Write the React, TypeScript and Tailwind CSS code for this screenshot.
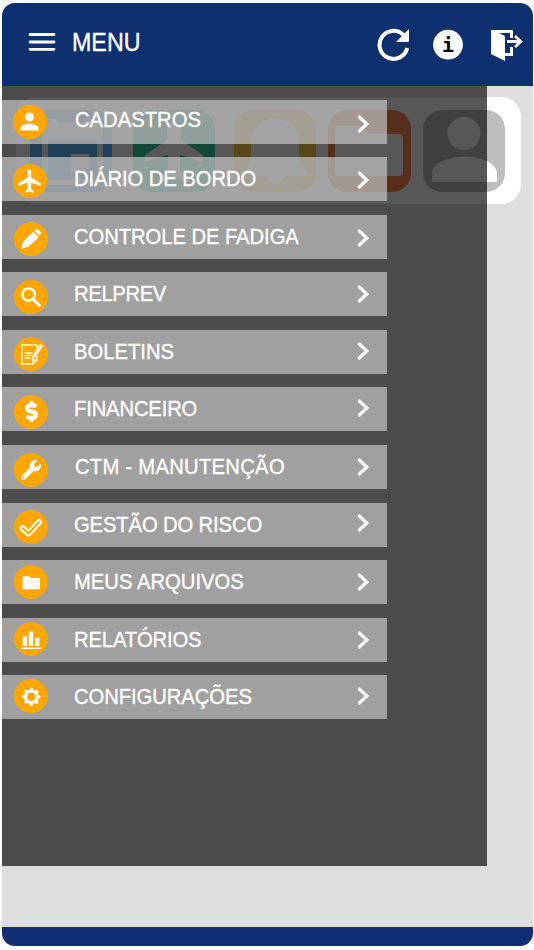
import React from 'react';
import { MdPerson, MdFlight } from 'react-icons/md';
import { FaDollarSign, FaWrench } from 'react-icons/fa';

const Pencil = () => (
  <svg viewBox="0 0 24 24" className="size-6" fill="white">
    <path d="M2 22 4.2 14.2 13.6 5.2Q14.4 4.8 15 5.5L19 9.6Q19.5 10.3 19 10.9L9.6 19.6Z" />
    <path d="M15.3 3.7 17 2.2Q18.2 1.4 19.2 2.4L21.6 4.9Q22.5 6 21.6 7L20.2 8.6Z" />
  </svg>
);

const Magnifier = () => (
  <svg viewBox="0 0 24 24" className="size-6" fill="none" stroke="white">
    <circle cx="9.6" cy="9.6" r="6.2" strokeWidth="2.5" />
    <path d="m14.2 14.2 7 7" strokeWidth="3" />
  </svg>
);

const Note = () => (
  <svg viewBox="0 0 24 24" className="size-6" fill="none" stroke="#fff6df" strokeWidth="1.4">
    <path d="M18 3H3v19h11l4-4v-4M14 22v-4h4M18 3v3" />
    <path d="M5.5 11h8M5.5 13.5h7M5.5 16h6" />
    <path d="m13.5 16.5 1-3.4L21.3 2.6l2 1.4-6.9 10.4z" fill="#fff6df" fillOpacity=".75" />
  </svg>
);

const DoubleCheck = () => (
  <svg viewBox="0 0 24 24" className="size-6" fill="none" strokeLinecap="round" strokeLinejoin="round">
    <path d="m3.7 13.2 5.8 5.3L20 7.3" stroke="white" strokeWidth="6" />
    <path d="m3.7 13.2 5.8 5.3L20 7.3" stroke="#ffa700" strokeWidth="2" />
  </svg>
);

const Folder = () => (
  <svg viewBox="0 0 24 24" className="size-6" fill="white">
    <path d="M4 6.2h6l2 1.8h8.2q.8 0 .8.8V18.4q0 .8-.8.8H4.4q-.8 0-.8-.8V6.8z" />
  </svg>
);

const Bars = () => (
  <svg viewBox="0 0 24 24" className="size-6" fill="white">
    <path d="M3.7 9.5h4.4v9.5h-4.4zM9.8 4.3h4.4V19h-4.4zM16 11h4.4v8h-4.4zM2.3 20.4h19.4V22H2.3z" />
  </svg>
);

const Gear = () => (
  <svg viewBox="0 0 24 24" className="size-6" fill="none" stroke="white">
    <circle cx="12.3" cy="12.8" r="5.8" strokeWidth="3" />
    <circle cx="12.3" cy="12.8" r="7.7" strokeWidth="2.6" strokeDasharray="3.1 2.95" strokeDashoffset="1.55" />
  </svg>
);

const items = [
  { label: 'CADASTROS', icon: <MdPerson className="size-[27px]" />, text: 'ml-[28.5px] mt-[-1.5px]', dot: 'ml-[10.5px] mt-[5px]', arrow: 'mt-[15px]' },
  { label: 'DIÁRIO DE BORDO', icon: <MdFlight className="size-7" />, text: 'tracking-[-0.08px] ml-[27.5px]', dot: 'ml-[10.5px] mt-[6.5px]', arrow: 'mt-[14px]' },
  { label: 'CONTROLE DE FADIGA', icon: <Pencil />, text: 'tracking-[-0.08px] ml-[26px]', dot: 'ml-3 mt-[7.5px]', arrow: 'mt-[14px]' },
  { label: 'RELPREV', icon: <Magnifier />, text: 'tracking-[-0.4px] ml-[26px]', dot: 'ml-3 mt-[7.7px]', arrow: 'mt-[13px]' },
  { label: 'BOLETINS', icon: <Note />, text: 'ml-[26px]', dot: 'ml-3 mt-[7.5px]', arrow: 'mt-[12px]' },
  { label: 'FINANCEIRO', icon: <FaDollarSign className="size-[21px]" stroke="white" strokeWidth="28" />, text: 'tracking-[-0.18px] ml-[26px]', dot: 'ml-3 mt-[7.5px]', arrow: 'mt-[12px]' },
  { label: 'CTM - MANUTENÇÃO', icon: <FaWrench className="size-5" />, text: 'tracking-[0.28px] ml-[27px]', dot: 'ml-3 mt-[7.5px]', arrow: 'mt-[13px]' },
  { label: 'GESTÃO DO RISCO', icon: <DoubleCheck />, text: 'tracking-[-0.15px] ml-[26px]', dot: 'ml-3 mt-[7px]', arrow: 'mt-[11.5px]' },
  { label: 'MEUS ARQUIVOS', icon: <Folder />, text: 'ml-[26px]', dot: 'ml-3 mt-[4.5px]', arrow: 'mt-[13px]' },
  { label: 'RELATÓRIOS', icon: <Bars />, text: 'tracking-[-0.18px] ml-[26px]', dot: 'ml-3 mt-[4px]', arrow: 'mt-[13px]' },
  { label: 'CONFIGURAÇÕES', icon: <Gear />, text: 'tracking-[-0.08px] ml-[26px]', dot: 'ml-3 mt-[4px]', arrow: 'mt-[11.5px]' },
];

function Shortcuts() {
  return (
    <div className="ml-[14px] mt-[11.5px] flex h-[107px] w-[505px] items-center rounded-[20px] bg-white pl-[14px]">
      <svg width="82" height="82" viewBox="0 0 82 82">
        <rect width="82" height="82" rx="19" fill="#5bbcff" />
        <rect x="15" y="15" width="55" height="57" rx="3" fill="none" stroke="white" strokeWidth="6" />
        <path d="M12 14h61v16H12zM19 9h8v8h-8zM58 9h8v8h-8zM41 44h18v18H41z" fill="white" />
      </svg>
      <svg className="ml-[21px]" width="82" height="82" viewBox="0 0 82 82">
        <rect width="82" height="82" rx="19" fill="#2fd4aa" />
        <path d="M34 17Q41 5 48 17V30L70 45V52L47 45V60L56 68V72L41 67 26 72V68L35 60V45L12 52V45L34 30Z" fill="white" />
      </svg>
      <svg className="ml-[19px]" width="82" height="82" viewBox="0 0 82 82">
        <rect width="82" height="82" rx="19" fill="#ffd352" />
        <path d="M41 8C26 8 17 20 17 33V48Q16 56 9 62V66H32Q34 74 41 74T50 66H73V62Q66 56 65 48V33C65 20 56 8 41 8Z" fill="white" />
      </svg>
      <svg className="ml-[12px]" width="83" height="82" viewBox="0 0 83 82">
        <rect width="83" height="82" rx="19" fill="#ff844f" />
        <path d="M10 16H33L41 24H70Q75 24 75 29V62Q75 66 70 66H11Q7 66 7 62V20Q7 16 10 16Z" fill="white" />
      </svg>
      <svg className="ml-[12px]" width="82" height="82" viewBox="0 0 82 82">
        <rect width="82" height="82" rx="19" fill="#bdbdbd" />
        <circle cx="41" cy="23.5" r="16.5" fill="white" />
        <path d="M9 72V64C9 41 74 41 74 64V72Z" fill="white" />
      </svg>
    </div>
  );
}

export default function App() {
  return (
    <div className="h-[950px] w-[534px] bg-white pl-[2px] pt-[3px] font-['Liberation_Sans',Arial,sans-serif]">
      <div className="flex h-[943px] w-[530.5px] flex-col overflow-hidden rounded-[13px] bg-[#dedede]">
        <header className="flex h-[82.5px] shrink-0 items-start bg-[#0f306f] text-white">
          <svg className="ml-[26px] mt-[29px]" width="28" height="20" viewBox="0 0 28 20" stroke="white" strokeWidth="2.8" strokeLinecap="round">
            <path d="M2 2.5h24M2 10h24M2 17.3h24" />
          </svg>
          <span className="ml-[15.5px] mt-[22px] origin-left scale-x-[0.93] text-[25px] leading-[34px] [-webkit-text-stroke:0.35px_white]">MENU</span>
          <div className="ml-auto flex">
            <svg className="mt-[24px]" width="34" height="34" viewBox="0 0 34 34" fill="none">
              <path d="M26.5 8A14 14 0 1 0 30.2 21" stroke="white" strokeWidth="4" />
              <path d="M32 2V15H19Z" fill="white" />
            </svg>
            <svg className="ml-[22px] mt-[26px]" width="30" height="31" viewBox="0 0 30 31">
              <circle cx="15" cy="15.7" r="14.9" fill="white" />
              <text x="15" y="23" textAnchor="middle" fontFamily="DejaVu Sans Mono" fontWeight="bold" fontSize="20" fill="black">i</text>
            </svg>
            <svg className="ml-[27px] mr-[10px] mt-[26px]" width="33" height="33" viewBox="0 0 33 33" fill="none">
              <path d="M1 1H23V9H20V4H9L15 7V32L1 25Z" fill="white" />
              <path d="M14 25.5H21.5V18" stroke="white" strokeWidth="3" />
              <path d="M17 12.5H30M25 7l5.8 5.5L25 18" stroke="white" strokeWidth="2.8" />
            </svg>
          </div>
        </header>
        <main className="relative h-[841px] shrink-0">
          <div className="flex"><Shortcuts /></div>
          <nav className="absolute left-0 top-0 h-[780.5px] w-[484.5px] bg-black/66 pt-[14px]">
            <ul className="flex w-[385px] flex-col gap-[13.6px]">
              {items.map((item) => (
                <li key={item.label} className="flex h-11 items-start bg-[rgba(193,193,193,0.72)] text-white">
                  <span className={`flex size-[34px] shrink-0 items-center justify-center rounded-full bg-[#ffa700] ${item.dot}`}>
                    {item.icon}
                  </span>
                  <span className={`origin-left scale-x-[0.92] whitespace-nowrap pt-[7px] text-[22px] leading-[30px] [-webkit-text-stroke:0.35px_white] ${item.text}`}>{item.label}</span>
                  <svg className={`ml-auto mr-[17px] shrink-0 ${item.arrow}`} width="13" height="18" viewBox="0 0 13 18" fill="none" stroke="white" strokeWidth="3.2" strokeLinecap="round">
                    <path d="m2.3 2 7.5 7-7.5 7" />
                  </svg>
                </li>
              ))}
            </ul>
          </nav>
        </main>
        <footer className="h-[20px] shrink-0 bg-[#112d73]" />
      </div>
    </div>
  );
}
